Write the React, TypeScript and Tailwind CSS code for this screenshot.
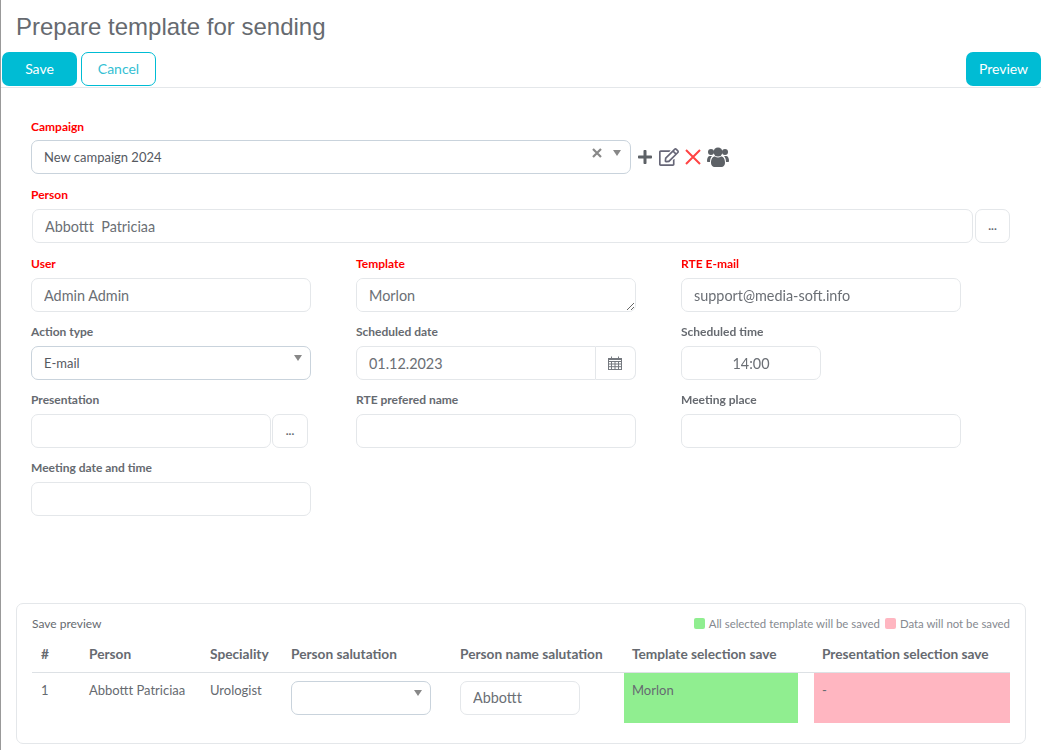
import type { ReactNode } from "react";
import { FaPlus, FaRegEdit } from "react-icons/fa";

const inputClass =
  "h-[34px] rounded-[7px] border border-[#e4e7ea] bg-white px-[12px] text-[14.4px] text-[#6b6f75] outline-none";

function Field({ label, required, tall, first, children }: { label: string; required?: boolean; tall?: boolean; first?: boolean; children: ReactNode }) {
  return (
    <div className={tall ? "mb-[14px]" : "mb-[13px]"}>
      <label className={`block ${first ? "h-[20px]" : "h-[21px]"} text-[12px] leading-[14px] font-bold ${required ? "text-[#f00]" : "text-[#666a70]"}`}>
        {label}
      </label>
      {children}
    </div>
  );
}

function FakeSelect({ value, width }: { value?: string; width: string }) {
  return (
    <div className={`relative h-[34px] ${width} rounded-[7px] border border-[#c9d3dc] bg-white px-[12px] text-[13px] leading-[33px] text-[#55595f]`}>
      {value}
      <span className="absolute top-[8px] right-[8px] h-0 w-0 border-x-[4px] border-t-[6px] border-x-transparent border-t-[#888]" />
    </div>
  );
}

export default function App() {
  return (
    <div className="h-[750px] w-[1041px] overflow-hidden border-l border-[#999] bg-white font-['Lato',sans-serif] text-[#666a70]">
      <h1 className="h-[52px] pl-[15px] font-['Liberation_Sans',sans-serif] text-[24px] leading-[54px] text-[#666a70]">
        Prepare template for sending
      </h1>
      <div className="flex h-[36px] items-start gap-[4px] border-b border-[#e4e7ea] pl-[1px]">
        <button className="h-[34px] w-[75px] rounded-[7px] bg-[#00bcd4] pb-[2px] text-[14px] text-white">Save</button>
        <button className="h-[34px] w-[75px] rounded-[7px] border border-[#00bcd4] bg-white pb-[2px] text-[14px] text-[#35bfd3]">Cancel</button>
        <button className="ml-auto h-[34px] w-[75px] rounded-[7px] bg-[#00bcd4] pb-[2px] text-[14px] text-white">Preview</button>
      </div>

      <form className="h-[515px] pt-[32px] pl-[30px]">
        <Field label="Campaign" required tall first>
          <div className="flex items-center">
            <div className="relative h-[34px] w-[600px] rounded-[7px] border border-[#c9d3dc] bg-white px-[12px] text-[13px] leading-[33px] text-[#55595f]">
              New campaign 2024
              <svg viewBox="0 0 10 10" className="absolute top-[7px] right-[28px] h-[10px] w-[10px]" fill="none" stroke="#888" strokeWidth="2.2">
                <path d="M1 1l8 8M9 1L1 9" />
              </svg>
              <span className="absolute top-[9px] right-[9px] h-0 w-0 border-x-[4px] border-t-[6px] border-x-transparent border-t-[#888]" />
            </div>
            <div className="ml-[6px] flex items-center gap-[6px] text-[#5d6166]">
              <FaPlus className="h-[16px] w-[16px]" />
              <FaRegEdit className="h-[20px] w-[20px] text-[#667]" />
              <svg viewBox="0 0 16 16" className="h-[16px] w-[16px]" fill="none" stroke="#f44" strokeWidth="2">
                <path d="M1 1l14 14M15 1L1 15" />
              </svg>
              <svg viewBox="0 0 22 20" className="h-[20px] w-[22px]" fill="currentColor">
                <circle cx="4" cy="5" r="3" />
                <circle cx="18" cy="5" r="3" />
                <circle cx="11" cy="5" r="4.5" />
                <path d="M0 14c0-3 1-5 3-5h2c-1 1-2 3-2 6H1c-.6 0-1-.4-1-1zM22 14c0-3-1-5-3-5h-2c1 1 2 3 2 6h2c.6 0 1-.4 1-1z" />
                <path d="M4 16c0-4 1.500-6.500 4-6.500 1 .8 2 1.100 3 1.100s2-.3 3-1.100c2.500 0 4 2.500 4 6.500 0 2-1.500 4-3.500 4h-7C5.500 20 4 18 4 16z" />
              </svg>
            </div>
          </div>
        </Field>

        <Field label="Person" required tall>
          <div className="flex items-center gap-[2px] pl-[1px]">
            <input readOnly value="Abbottt  Patriciaa" className={`${inputClass} w-[941px]`} />
            <button type="button" className="h-[34px] w-[35px] rounded-[7px] border border-[#e4e7ea] text-[12px] font-bold">...</button>
          </div>
        </Field>

        <div className="grid w-[975px] grid-cols-3">
          <Field label="User" required>
            <input readOnly value="Admin Admin" className={`${inputClass} w-[280px]`} />
          </Field>
          <Field label="Template" required>
            <textarea readOnly value="Morlon" className={`${inputClass} block w-[280px] py-[6px]`} />
          </Field>
          <Field label="RTE E-mail" required>
            <input readOnly value="support@media-soft.info" className={`${inputClass} w-[280px]`} />
          </Field>

          <Field label="Action type">
            <FakeSelect value="E-mail" width="w-[280px]" />
          </Field>
          <Field label="Scheduled date">
            <div className="flex w-[280px]">
              <input readOnly value="01.12.2023" className={`${inputClass} w-[240px] rounded-r-none`} />
              <div className="flex h-[34px] w-[40px] items-center justify-center rounded-r-[7px] border border-l-0 border-[#e4e7ea] pr-[2px]">
                <svg viewBox="0 0 14 14" className="h-[14px] w-[14px]" fill="none" stroke="#75797f" strokeWidth="1">
                  <rect x="0.5" y="2.500" width="13" height="11" />
                  <path d="M0.500 3.500h13v2h-13zM0.500 8h13M0.500 10.700h13M3.500 5.500v8M7 5.500v8M10.500 5.500v8M3.500 0.500v3M10.500 0.500v3" />
                </svg>
              </div>
            </div>
          </Field>
          <Field label="Scheduled time">
            <input readOnly value="14:00" className={`${inputClass} w-[140px] text-center`} />
          </Field>

          <Field label="Presentation">
            <div className="flex items-center gap-px">
              <input readOnly className={`${inputClass} w-[240px]`} />
              <button type="button" className="h-[34px] w-[36px] rounded-[7px] border border-[#e4e7ea] text-[12px] font-bold">...</button>
            </div>
          </Field>
          <Field label="RTE prefered name">
            <input readOnly className={`${inputClass} w-[280px]`} />
          </Field>
          <Field label="Meeting place">
            <input readOnly className={`${inputClass} w-[280px]`} />
          </Field>

          <Field label="Meeting date and time">
            <input readOnly className={`${inputClass} w-[280px]`} />
          </Field>
        </div>
      </form>

      <section className="ml-[15px] h-[141px] w-[1010px] rounded-[7px] border border-[#e4e7ea] px-[15px] pt-[10px]">
        <div className="flex h-[20px] items-center justify-between text-[12px]">
          <span>Save preview</span>
          <div className="flex items-center text-[11.4px] text-[#85898f]">
            <span className="mr-[4px] h-[11px] w-[11px] rounded-[2px] bg-[#90ee90]" />
            <span className="mr-[5px]">All selected template will be saved</span>
            <span className="mr-[4px] h-[11px] w-[11px] rounded-[2px] bg-[#ffb6c1]" />
            <span>Data will not be saved</span>
          </div>
        </div>
        <table className="w-[978px] table-fixed border-collapse text-left text-[13px]">
          <colgroup>
            <col className="w-[48px]" />
            <col className="w-[121px]" />
            <col className="w-[81px]" />
            <col className="w-[169px]" />
            <col className="w-[173px]" />
            <col className="w-[190px]" />
            <col className="w-[196px]" />
          </colgroup>
          <thead>
            <tr className="h-[38px] border-b border-[#dde1e5] text-[13.7px]">
              <th className="pt-[4px] pl-[9px] font-bold">#</th>
              <th className="pt-[4px] pl-[9px] font-bold">Person</th>
              <th className="pt-[4px] pl-[9px] font-bold">Speciality</th>
              <th className="pt-[4px] pl-[9px] font-bold">Person salutation</th>
              <th className="pt-[4px] pl-[9px] font-bold">Person name salutation</th>
              <th className="pt-[4px] pl-[8px] font-bold">Template selection save</th>
              <th className="pt-[4px] pl-[8px] font-bold">Presentation selection save</th>
            </tr>
          </thead>
          <tbody>
            <tr className="h-[50px] align-top">
              <td className="pt-[8px] pl-[9px]">1</td>
              <td className="pt-[8px] pl-[9px]">Abbottt Patriciaa</td>
              <td className="pt-[8px] pl-[9px]">Urologist</td>
              <td className="pt-[8px] pl-[9px]">
                <FakeSelect width="w-[140px]" />
              </td>
              <td className="pt-[8px] pl-[9px]">
                <input readOnly value="Abbottt" className={`${inputClass} w-[120px]`} />
              </td>
              <td className="pr-[16px]">
                <div className="h-[50px] bg-[#90ee90] pt-[8px] pl-[8px]">Morlon</div>
              </td>
              <td>
                <div className="h-[50px] bg-[#ffb6c1] pt-[8px] pl-[8px]">-</div>
              </td>
            </tr>
          </tbody>
        </table>
      </section>
    </div>
  );
}
